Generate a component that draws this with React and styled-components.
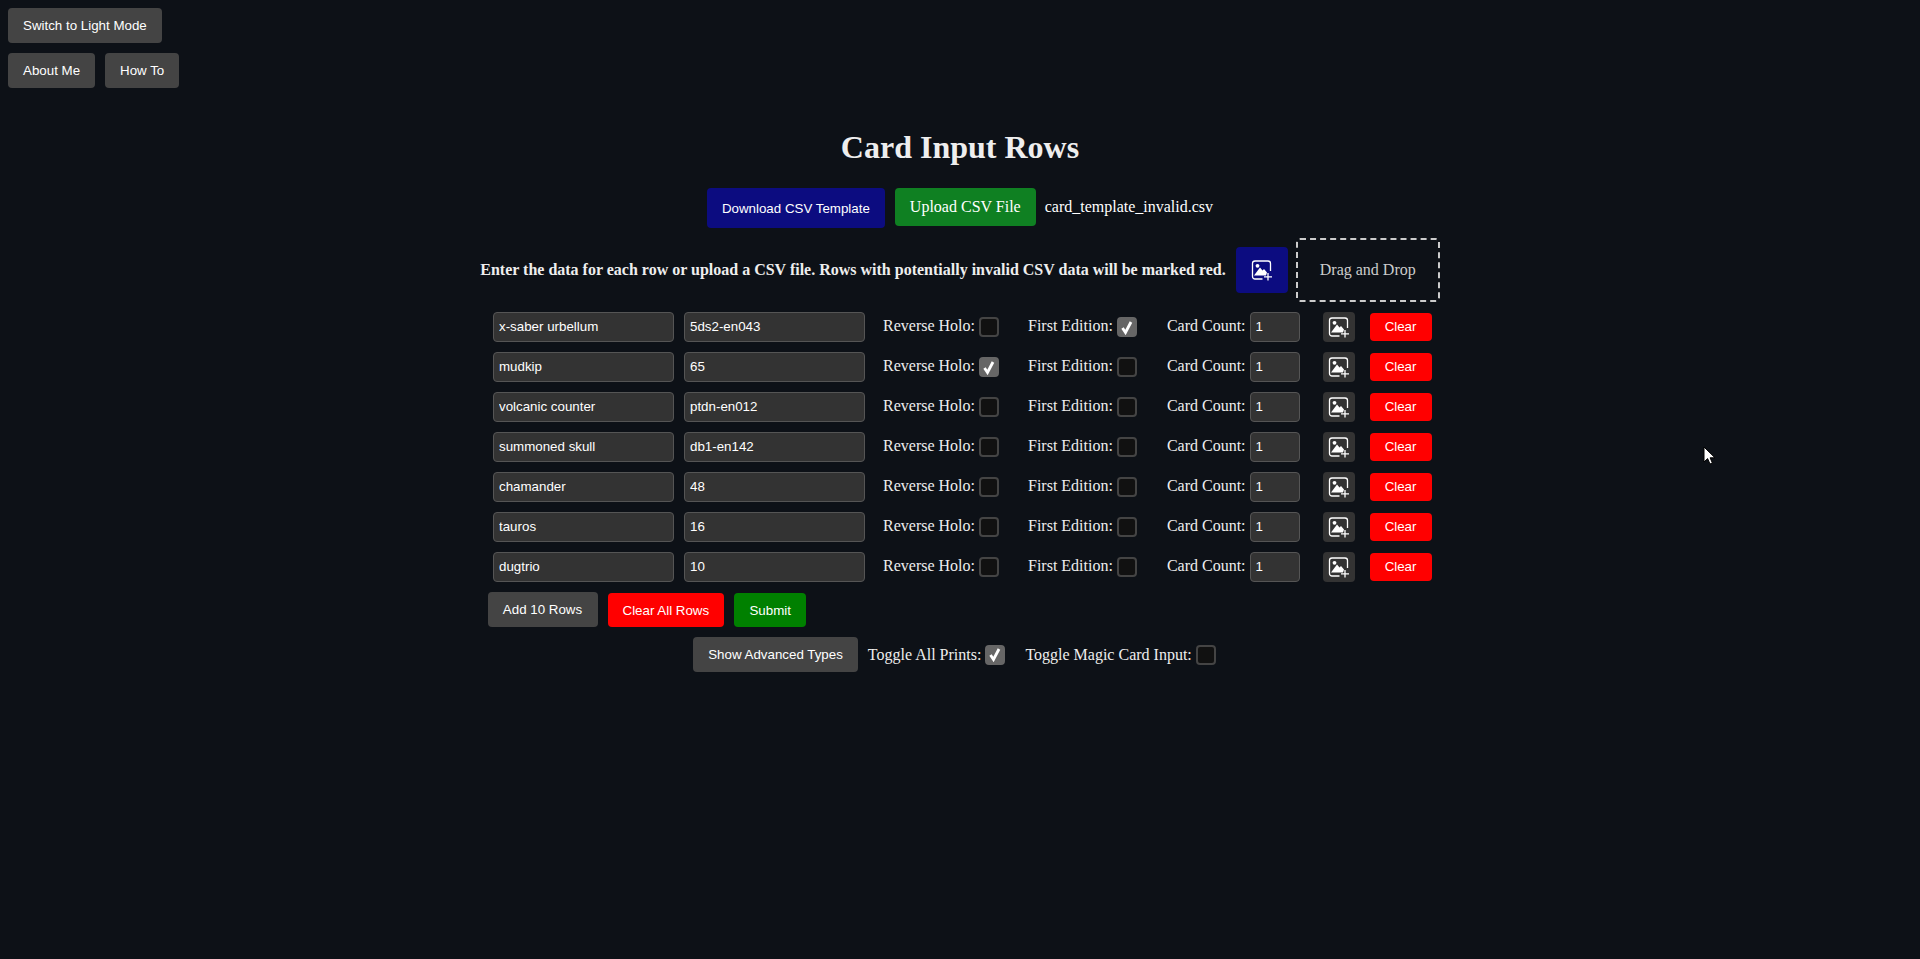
import React from 'react';
import styled, { createGlobalStyle } from 'styled-components';

const GlobalStyle = createGlobalStyle`
  html, body {
    margin: 0;
    height: 100%;
    background: #0d1117;
    color: #fff;
    font-family: "Liberation Serif", "Times New Roman", serif;
    font-size: 16px;
  }
  #root {
    height: 100%;
  }
`;

const Page = styled.div`
  position: relative;
  min-height: 959px;
  padding: 8px;
  box-sizing: border-box;
  overflow: hidden;
`;

const Button = styled.button`
  height: ${(p) => p.$h || 35}px;
  min-width: ${(p) => p.$minw || 0}px;
  padding: 0 15px;
  border: 0;
  border-radius: 4px;
  background: ${(p) => p.$bg || '#444'};
  color: #fff;
  font: 13.333px "Liberation Sans", Arial, sans-serif;
  white-space: nowrap;
`;

const TopBar = styled.div`
  display: flex;
  gap: 10px;
  margin-bottom: 10px;
`;

const Main = styled.main`
  display: flex;
  flex-direction: column;
  align-items: center;
  padding-top: 31px;
`;

const Title = styled.h1`
  margin: 0 0 22px;
  height: 37px;
  font-size: 32px;
  line-height: 37px;
  font-weight: bold;
  color: #eee;
`;

const CsvBar = styled.div`
  display: flex;
  align-items: flex-start;
  gap: 10px;
  height: 40px;
  margin-bottom: 10px;
`;

const UploadLabel = styled.label`
  display: block;
  padding: 10px 15px;
  line-height: 18px;
  border-radius: 4px;
  background: #0f8022;
`;

const FileName = styled.span`
  line-height: 38px;
  margin-left: -1px;
`;

const InstructionBar = styled.div`
  display: flex;
  align-items: center;
  gap: 8px;
  height: 64px;
  margin-bottom: 10px;
`;

const Instruction = styled.p`
  margin: 0 2px 0 0;
  font-weight: bold;
  color: #eee;
`;

const IconButton = styled.button`
  display: flex;
  align-items: center;
  justify-content: center;
  width: ${(p) => p.$w}px;
  height: ${(p) => p.$h}px;
  margin-left: ${(p) => p.$ml || 0}px;
  padding: 0;
  border: 0;
  border-radius: 4px;
  background: ${(p) => p.$bg};
  color: #fff;
`;

const DropZone = styled.div`
  display: flex;
  align-items: center;
  justify-content: center;
  width: 144px;
  height: 64px;
  box-sizing: border-box;
  border: 2px dashed #ccc;
  border-radius: 4px;
  color: #ccc;
`;

const Rows = styled.div`
  display: flex;
  flex-direction: column;
  gap: 10px;
  width: 939px;
  margin-left: 5px;
`;

const Row = styled.div`
  display: flex;
  align-items: center;
  height: 30px;
`;

const TextField = styled.input`
  box-sizing: border-box;
  width: ${(p) => p.$w}px;
  height: 30px;
  margin-right: ${(p) => p.$mr}px;
  padding: 0 5px 2px;
  border: 1px solid #555;
  border-radius: 4px;
  background: #333;
  color: #fff;
  font: 13.333px "Liberation Sans", Arial, sans-serif;
  outline: none;
`;

const Label = styled.label`
  display: flex;
  align-items: center;
  gap: 4px;
  margin-right: ${(p) => p.$mr || 0}px;
  white-space: nowrap;
  color: #eee;
`;

const RowCaption = styled.span`
  margin-bottom: 2px;
`;

const Box = styled.span`
  display: flex;
  align-items: center;
  justify-content: center;
  box-sizing: border-box;
  width: 20px;
  height: 20px;
  border: 2px solid ${(p) => (p.$on ? '#666' : '#444')};
  border-radius: 4px;
  background: ${(p) => (p.$on ? '#666' : '#111')};
`;

const ClearButton = styled(Button)`
  width: 62px;
  height: 28px;
  padding: 0 0 2px;
  margin-left: 15px;
  background: #f00;
`;

const ActionBar = styled.div`
  display: flex;
  align-items: flex-end;
  gap: 10px;
  width: 959px;
  box-sizing: border-box;
  padding-left: 7px;
  margin: 10px 0;
`;

const OptionBar = styled.div`
  display: flex;
  align-items: center;
  gap: 10px;
  margin-right: 11px;
`;

const Cursor = styled.svg`
  position: absolute;
  left: 1703px;
  top: 446px;
`;

const ImageAdd = ({ size = 22 }) => (
  <svg width={size} height={size} viewBox="0 0 22 22" fill="none">
    <path d="M11.5 20H4a2.5 2.5 0 0 1-2.5-2.5v-13A2.5 2.5 0 0 1 4 2h13a2.5 2.5 0 0 1 2.5 2.5V12" stroke="currentColor" strokeWidth="1.3" />
    <circle cx="6.5" cy="6.8" r="1.9" fill="currentColor" />
    <path d="M3 16.5 9 8.5l2.5 3 1.5-1.5 3 3.5-1 3H3z" fill="currentColor" />
    <path d="M17 14v7.5M13 17.8h8" stroke="currentColor" strokeWidth="1.3" />
  </svg>
);

const Check = () => (
  <svg width="14" height="15" viewBox="0 0 14 15" fill="none">
    <path d="M2.5 8 5.5 12.5 11 2" stroke="#fff" strokeWidth="2.8" />
  </svg>
);

const cards = [
  ['x-saber urbellum', '5ds2-en043', false, true],
  ['mudkip', '65', true, false],
  ['volcanic counter', 'ptdn-en012', false, false],
  ['summoned skull', 'db1-en142', false, false],
  ['chamander', '48', false, false],
  ['tauros', '16', false, false],
  ['dugtrio', '10', false, false],
];

export default function App() {
  return (
    <Page>
      <GlobalStyle />
      <TopBar>
        <Button>Switch to Light Mode</Button>
      </TopBar>
      <TopBar>
        <Button>About Me</Button>
        <Button>How To</Button>
      </TopBar>
      <Main>
        <Title>Card Input Rows</Title>
        <CsvBar>
          <Button $h={40} $bg="#0c0c80">Download CSV Template</Button>
          <UploadLabel>Upload CSV File</UploadLabel>
          <FileName>card_template_invalid.csv</FileName>
        </CsvBar>
        <InstructionBar>
          <Instruction>Enter the data for each row or upload a CSV file. Rows with potentially invalid CSV data will be marked red.</Instruction>
          <IconButton $w={52} $h={46} $bg="#0c0c80"><ImageAdd /></IconButton>
          <DropZone>Drag and Drop</DropZone>
        </InstructionBar>
        <Rows>
          {cards.map(([name, number, holo, first]) => (
            <Row key={name}>
              <TextField $w={181} $mr={10} defaultValue={name} />
              <TextField $w={181} $mr={18} defaultValue={number} />
              <Label $mr={29}><RowCaption>Reverse Holo:</RowCaption> <Box $on={holo}>{holo && <Check />}</Box></Label>
              <Label $mr={30}><RowCaption>First Edition:</RowCaption> <Box $on={first}>{first && <Check />}</Box></Label>
              <Label><RowCaption>Card Count:</RowCaption> <TextField $w={50} $mr={0} defaultValue="1" /></Label>
              <IconButton $w={32} $h={30} $ml={23} $bg="#333"><ImageAdd /></IconButton>
              <ClearButton>Clear</ClearButton>
            </Row>
          ))}
        </Rows>
        <ActionBar>
          <Button $minw={110}>Add 10 Rows</Button>
          <Button $h={34} $minw={116} $bg="#f00">Clear All Rows</Button>
          <Button $h={34} $minw={72} $bg="#008000">Submit</Button>
        </ActionBar>
        <OptionBar>
          <Button>Show Advanced Types</Button>
          <Label $mr={10}>Toggle All Prints: <Box $on><Check /></Box></Label>
          <Label>Toggle Magic Card Input: <Box /></Label>
        </OptionBar>
      </Main>
      <Cursor width="14" height="20" viewBox="0 0 14 20">
        <path d="M1 1v15l3.6-3.4L7 18l2.4-1-2.3-5.2H12z" fill="#fff" stroke="#000" strokeWidth="1" />
      </Cursor>
    </Page>
  );
}
